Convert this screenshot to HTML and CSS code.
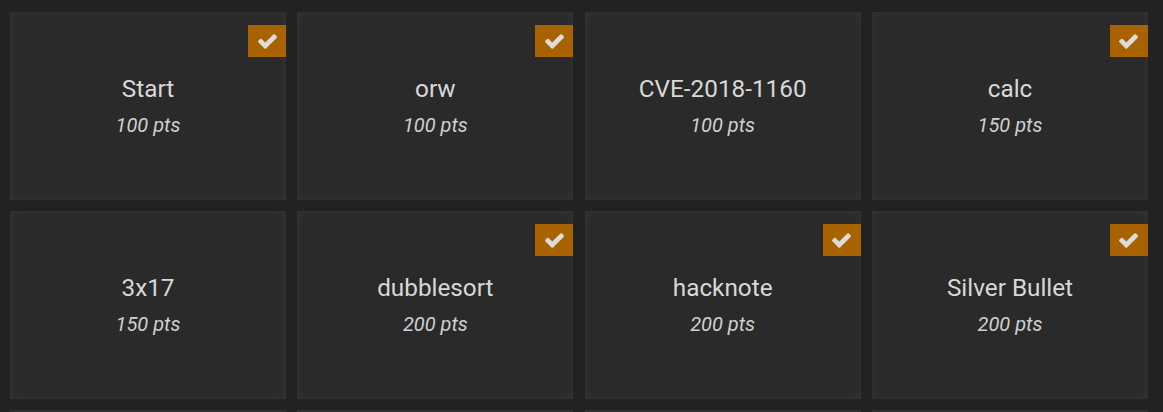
FILE: index.html
```html
<!DOCTYPE html>
<html lang="en">
<head>
<meta charset="utf-8">
<title>Challenges</title>
<link rel="stylesheet" href="styles.css">
</head>
<body>
<div class="board">
  <div class="card solved">
    <span class="badge"><svg viewBox="121 334 1550 1188" width="19" height="15"><path d="M1671 566q0 40-28 68l-724 724-136 136q-28 28-68 28t-68-28l-136-136-362-362q-28-28-28-68t28-68l136-136q28-28 68-28t68 28l294 295 656-657q28-28 68-28t68 28l136 136q28 28 28 68z"/></svg></span>
    <div class="name">Start</div>
    <div class="pts">100 pts</div>
  </div>
  <div class="card solved">
    <span class="badge"><svg viewBox="121 334 1550 1188" width="19" height="15"><path d="M1671 566q0 40-28 68l-724 724-136 136q-28 28-68 28t-68-28l-136-136-362-362q-28-28-28-68t28-68l136-136q28-28 68-28t68 28l294 295 656-657q28-28 68-28t68 28l136 136q28 28 28 68z"/></svg></span>
    <div class="name">orw</div>
    <div class="pts">100 pts</div>
  </div>
  <div class="card">
    <div class="name">CVE-2018-1160</div>
    <div class="pts">100 pts</div>
  </div>
  <div class="card solved">
    <span class="badge"><svg viewBox="121 334 1550 1188" width="19" height="15"><path d="M1671 566q0 40-28 68l-724 724-136 136q-28 28-68 28t-68-28l-136-136-362-362q-28-28-28-68t28-68l136-136q28-28 68-28t68 28l294 295 656-657q28-28 68-28t68 28l136 136q28 28 28 68z"/></svg></span>
    <div class="name">calc</div>
    <div class="pts">150 pts</div>
  </div>
  <div class="card">
    <div class="name">3x17</div>
    <div class="pts">150 pts</div>
  </div>
  <div class="card solved">
    <span class="badge"><svg viewBox="121 334 1550 1188" width="19" height="15"><path d="M1671 566q0 40-28 68l-724 724-136 136q-28 28-68 28t-68-28l-136-136-362-362q-28-28-28-68t28-68l136-136q28-28 68-28t68 28l294 295 656-657q28-28 68-28t68 28l136 136q28 28 28 68z"/></svg></span>
    <div class="name">dubblesort</div>
    <div class="pts">200 pts</div>
  </div>
  <div class="card solved">
    <span class="badge"><svg viewBox="121 334 1550 1188" width="19" height="15"><path d="M1671 566q0 40-28 68l-724 724-136 136q-28 28-68 28t-68-28l-136-136-362-362q-28-28-28-68t28-68l136-136q28-28 68-28t68 28l294 295 656-657q28-28 68-28t68 28l136 136q28 28 28 68z"/></svg></span>
    <div class="name">hacknote</div>
    <div class="pts">200 pts</div>
  </div>
  <div class="card solved">
    <span class="badge"><svg viewBox="121 334 1550 1188" width="19" height="15"><path d="M1671 566q0 40-28 68l-724 724-136 136q-28 28-68 28t-68-28l-136-136-362-362q-28-28-28-68t28-68l136-136q28-28 68-28t68 28l294 295 656-657q28-28 68-28t68 28l136 136q28 28 28 68z"/></svg></span>
    <div class="name">Silver Bullet</div>
    <div class="pts">200 pts</div>
  </div>
  <div class="card"></div>
  <div class="card"></div>
  <div class="card"></div>
  <div class="card"></div>
</div>
</body>
</html>
```

FILE: styles.css
```css
html, body {
  margin: 0;
  padding: 0;
  background: #222222;
  overflow: hidden;
}

body {
  font-family: Roboto, "Liberation Sans", sans-serif;
  color: #d6d6d6;
}

.board {
  width: 1138px;
  padding: 12px 0 0 10px;
  display: grid;
  grid-template-columns: repeat(4, 276px);
  grid-auto-rows: 188px;
  justify-content: space-between;
  row-gap: 11px;
}

.card {
  position: relative;
  box-sizing: border-box;
  padding-bottom: 1px;
  background: #2a2a2a;
  box-shadow: inset 0 0 10px rgba(255, 255, 255, 0.06);
  display: flex;
  flex-direction: column;
  align-items: center;
  justify-content: center;
  text-align: center;
}

.name {
  font-size: 24.3px;
  line-height: 1.2;
  color: #d8d8d8;
}

.pts {
  margin-top: 9px;
  font-size: 20px;
  line-height: 1.2;
  font-style: italic;
  color: #cfcfcf;
}

.badge {
  position: absolute;
  top: 13px;
  right: 0;
  width: 38px;
  height: 32px;
  background: #a86200;
  display: flex;
  align-items: center;
  justify-content: center;
}

.badge svg {
  fill: #dcdcdc;
  display: block;
}
```
